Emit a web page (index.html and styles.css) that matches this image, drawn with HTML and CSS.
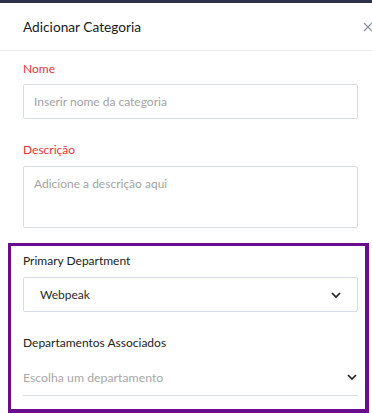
FILE: index.html
```html
<!DOCTYPE html>
<html lang="pt">
<head>
  <meta charset="UTF-8">
  <title>Adicionar Categoria</title>
  <link rel="stylesheet" href="styles.css">
</head>
<body>

<div class="topbar"></div>

<div class="modal">
  <div class="modal-header">
    <h1>Adicionar Categoria</h1>
    <svg class="close" width="10" height="10" viewBox="0 0 10 10">
      <path d="M1 1 L9 9 M9 1 L1 9" stroke="#8a8e9c" stroke-width="1.2" fill="none"/>
    </svg>
  </div>

  <div class="modal-body">
    <div class="field">
      <label class="required">Nome</label>
      <div class="input">Inserir nome da categoria</div>
    </div>

    <div class="field">
      <label class="required">Descrição</label>
      <div class="input textarea">Adicione a descrição aqui</div>
    </div>

    <div class="highlight">
      <div class="field">
        <label>Primary Department</label>
        <div class="input select">
          <span class="value">Webpeak</span>
          <svg width="10" height="6" viewBox="0 0 10 6">
            <polyline points="1,1 5,5 9,1" stroke="#222" stroke-width="1.7" fill="none"/>
          </svg>
        </div>
      </div>

      <div class="field">
        <label>Departamentos Associados</label>
        <div class="line-select">
          <span>Escolha um departamento</span>
          <svg width="10" height="6" viewBox="0 0 10 6">
            <polyline points="1,1 5,5 9,1" stroke="#222" stroke-width="1.7" fill="none"/>
          </svg>
        </div>
      </div>
    </div>
  </div>
</div>

</body>
</html>
```

FILE: styles.css
```css
body {
  margin: 0;
  background: #fff;
  font-family: Lato, "Noto Sans", sans-serif;
  color: #222;
  overflow: hidden;
}
.topbar {
  height: 3px;
  background: #2e3148;
}
.modal {
  width: 381px;
}
.modal-header {
  display: flex;
  align-items: center;
  justify-content: space-between;
  height: 47px;
  padding: 0 8px 0 23px;
  border-bottom: 1px solid #e6ebf2;
}
.modal-header h1 {
  margin: 0;
  font-size: 13.7px;
  font-weight: 400;
  color: #1a1a1a;
}
.modal-body {
  padding: 0 23px;
}
.field {
  padding-top: 10px;
}
.field + .field {
  padding-top: 23px;
}
.field label {
  display: block;
  font-size: 12px;
  line-height: 16px;
  margin-bottom: 8px;
}
.field:first-child label.required {
  margin-bottom: 7px;
}
.field label.required {
  color: #e2373c;
}
.input {
  box-sizing: border-box;
  height: 35px;
  border: 1px solid #d6dde7;
  border-radius: 2px;
  padding: 0 10px;
  display: flex;
  align-items: center;
  font-size: 12px;
  color: #a3a3a3;
}
.textarea {
  height: 62px;
  align-items: flex-start;
  padding-top: 9px;
}
.highlight {
  margin: 15px -11px 0 -15px;
  border: 3px solid #6a0d8d;
  border-right-width: 4px;
  border-bottom-width: 4px;
  padding: 0 7px 13px 12px;
}
.highlight .field {
  padding-top: 7px;
}
.highlight .field + .field {
  padding-top: 23px;
}
.select {
  justify-content: space-between;
  padding: 0 16px 0 16px;
  color: #2a2a2a;
  font-size: 12px;
}
.line-select {
  box-sizing: border-box;
  height: 37px;
  display: flex;
  align-items: center;
  justify-content: space-between;
  border-bottom: 1px solid #d6dde7;
  padding-right: 1px;
  font-size: 12.3px;
  color: #a8a8a8;
}
```
